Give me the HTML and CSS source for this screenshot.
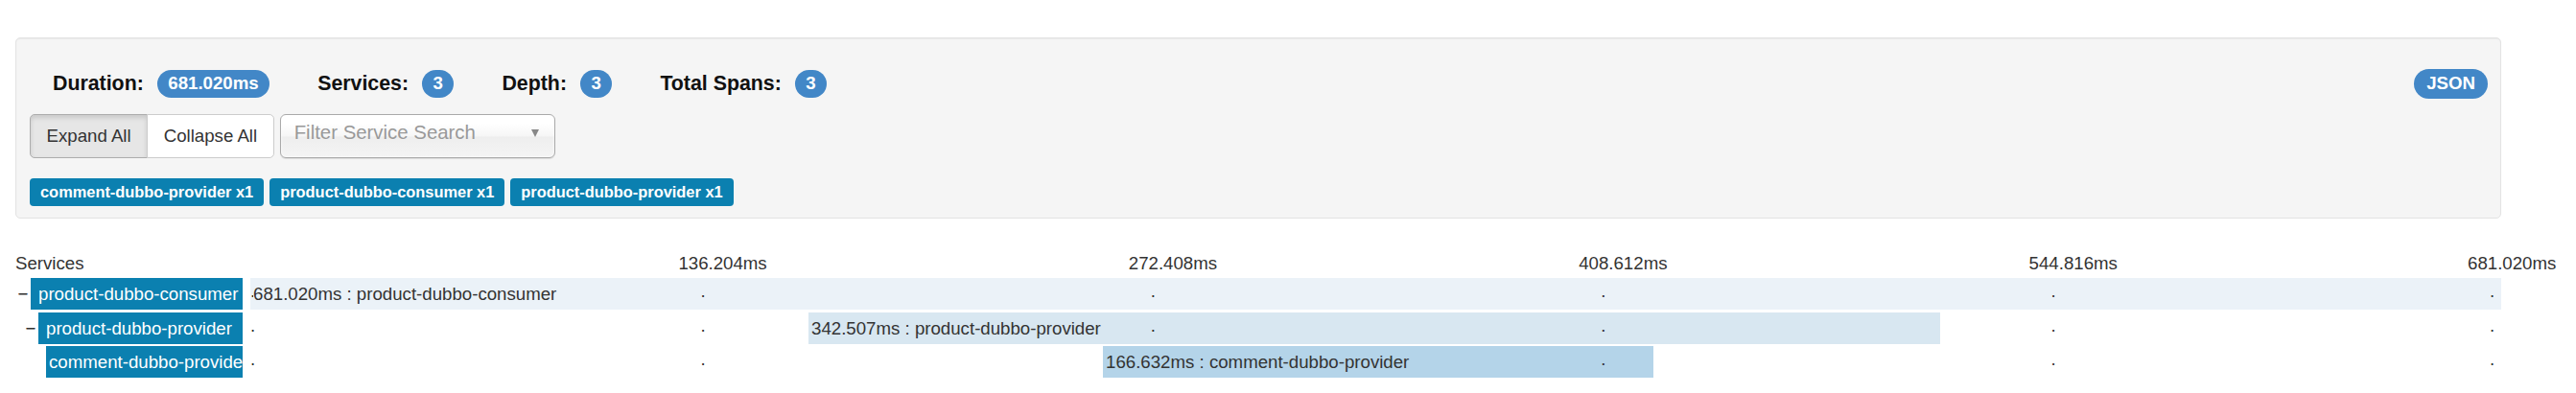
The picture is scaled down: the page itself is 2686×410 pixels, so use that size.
FILE: index.html
```html
<!DOCTYPE html>
<html lang="en">
<head>
<meta charset="utf-8">
<title>Trace</title>
<link rel="stylesheet" href="styles.css">
</head>
<body>
<main class="page">
  <section class="well">
    <div class="stats">
      <div class="stat-list">
        <span class="stat"><strong class="stat-label">Duration:</strong><span class="badge">681.020ms</span></span>
        <span class="stat"><strong class="stat-label">Services:</strong><span class="badge">3</span></span>
        <span class="stat"><strong class="stat-label">Depth:</strong><span class="badge">3</span></span>
        <span class="stat"><strong class="stat-label">Total Spans:</strong><span class="badge">3</span></span>
      </div>
      <a class="badge badge-json">JSON</a>
    </div>
    <div class="controls">
      <div class="btn-group">
        <button class="btn active" type="button">Expand All</button>
        <button class="btn" type="button">Collapse All</button>
      </div>
      <div class="chosen">
        <span class="placeholder">Filter Service Search</span>
        <svg class="arrow" width="8" height="8" viewBox="0 0 8 8"><polygon points="0,0 8,0 4,8" fill="#888"/></svg>
      </div>
    </div>
    <div class="tags">
      <span class="tag">comment-dubbo-provider x1</span>
      <span class="tag">product-dubbo-consumer x1</span>
      <span class="tag">product-dubbo-provider x1</span>
    </div>
  </section>

  <section class="trace">
    <div class="trace-header">
      <div class="handle-col">Services</div>
      <div class="timeline">
        <span class="tick" style="left: calc(20% - 23px)">136.204ms</span>
        <span class="tick" style="left: calc(40% - 23px)">272.408ms</span>
        <span class="tick" style="left: calc(60% - 23px)">408.612ms</span>
        <span class="tick" style="left: calc(80% - 23px)">544.816ms</span>
        <span class="tick" style="left: calc(100% - 35px)">681.020ms</span>
      </div>
    </div>

    <div class="row">
      <div class="handle depth-0">
        <span class="toggle">&minus;</span>
        <span class="svc">product-dubbo-consumer</span>
      </div>
      <div class="track">
        <div class="bar bar-1" style="left: 0%; width: 100%"><span class="bar-text">681.020ms : product-dubbo-consumer</span></div>
        <span class="dot" style="left: 0%">.</span>
        <span class="dot" style="left: 20%">.</span>
        <span class="dot" style="left: 40%">.</span>
        <span class="dot" style="left: 60%">.</span>
        <span class="dot" style="left: 80%">.</span>
        <span class="dot" style="left: calc(100% - 12px)">.</span>
      </div>
    </div>

    <div class="row">
      <div class="handle depth-1">
        <span class="toggle">&minus;</span>
        <span class="svc">product-dubbo-provider</span>
      </div>
      <div class="track">
        <div class="bar bar-2" style="left: 24.8%; width: 50.29%"><span class="bar-text">342.507ms : product-dubbo-provider</span></div>
        <span class="dot" style="left: 0%">.</span>
        <span class="dot" style="left: 20%">.</span>
        <span class="dot" style="left: 40%">.</span>
        <span class="dot" style="left: 60%">.</span>
        <span class="dot" style="left: 80%">.</span>
        <span class="dot" style="left: calc(100% - 12px)">.</span>
      </div>
    </div>

    <div class="row">
      <div class="handle depth-2">
        <span class="toggle"></span>
        <span class="svc svc-tight">comment-dubbo-provider</span>
      </div>
      <div class="track">
        <div class="bar bar-3" style="left: 37.88%; width: 24.47%"><span class="bar-text">166.632ms : comment-dubbo-provider</span></div>
        <span class="dot" style="left: 0%">.</span>
        <span class="dot" style="left: 20%">.</span>
        <span class="dot" style="left: 40%">.</span>
        <span class="dot" style="left: 60%">.</span>
        <span class="dot" style="left: 80%">.</span>
        <span class="dot" style="left: calc(100% - 12px)">.</span>
      </div>
    </div>
  </section>
</main>
</body>
</html>
```

FILE: styles.css
```css
* {
  box-sizing: border-box;
}

html,
body {
  margin: 0;
  background: #fff;
}

body {
  font-family: "Liberation Sans", Arial, sans-serif;
  font-size: 18.67px;
  line-height: 26.67px;
  color: #333;
}

.page {
  width: 2592px;
  margin: 39px 0 0 16px;
}

/* ---------- summary well ---------- */
.well {
  background: #f5f5f5;
  border: 1px solid #e3e3e3;
  border-radius: 5px;
  box-shadow: inset 0 1px 1px rgba(0, 0, 0, 0.05);
  padding: 32px 13px 12px 14px;
  margin-bottom: 34px;
}

.stats {
  display: flex;
  align-items: center;
  justify-content: space-between;
  height: 31px;
  margin: 0 0 16px 24px;
}

.stat-list {
  display: flex;
  align-items: center;
  gap: 50px;
}

.stat {
  display: flex;
  align-items: center;
  gap: 14px;
}

.stat-label {
  font-size: 21.33px;
  line-height: 24px;
  font-weight: bold;
  color: #111;
}

.badge {
  display: inline-block;
  background: #4287c7;
  color: #fff;
  font-weight: bold;
  font-size: 18.67px;
  line-height: 1;
  padding: 5px 11.5px;
  border-radius: 15px;
  white-space: nowrap;
}

.badge-json {
  padding: 6px 13px;
  border-radius: 16px;
  text-decoration: none;
}

.controls {
  display: flex;
  gap: 6px;
  height: 46px;
  margin-bottom: 21px;
}

.btn-group {
  display: flex;
}

.btn {
  font: inherit;
  color: #333;
  background: #fff;
  border: 1px solid #ccc;
  padding: 0 16.5px;
  height: 46px;
  line-height: 44px;
  margin: 0;
}

.btn:first-child {
  border-radius: 5px 0 0 5px;
}

.btn:last-child {
  border-radius: 0 5px 5px 0;
  margin-left: -1px;
}

.btn.active {
  background: #e6e6e6;
  border-color: #adadad;
  box-shadow: inset 0 3px 5px rgba(0, 0, 0, 0.125);
}

.chosen {
  width: 287px;
  height: 46px;
  border: 1px solid #aaa;
  border-radius: 6px;
  background: linear-gradient(#fff 20%, #f6f6f6 50%, #eee 52%, #f4f4f4 100%);
  box-shadow: inset 0 0 3px #fff, 0 1px 1px rgba(0, 0, 0, 0.1);
  display: flex;
  align-items: flex-start;
  justify-content: space-between;
  padding: 5px 16px 0 14px;
  color: #999;
  font-size: 20.4px;
}

.arrow {
  margin-top: 10px;
}

.tags {
  display: flex;
  gap: 6px;
}

.tag {
  background: #0b80b0;
  color: #fff;
  font-weight: bold;
  font-size: 16.4px;
  line-height: 16px;
  padding: 6px 11px 7px;
  border-radius: 4px;
  white-space: nowrap;
}

/* ---------- trace timeline ---------- */
.trace-header {
  display: flex;
  height: 28px;
}

.handle-col {
  width: 245px;
  flex: none;
}

.timeline {
  position: relative;
  flex: 1;
}

.tick {
  position: absolute;
  top: 0;
  white-space: nowrap;
}

.row {
  display: flex;
  height: 33px;
  margin-bottom: 2.5px;
}

.handle {
  width: 245px;
  flex: none;
  display: flex;
  padding-right: 8px;
}

.depth-1 {
  padding-left: 8px;
}

.depth-2 {
  padding-left: 16px;
}

.toggle {
  width: 16px;
  flex: none;
  text-align: center;
  line-height: 33px;
}

.svc {
  flex: 1;
  min-width: 0;
  background: #0b80b0;
  color: #fff;
  padding-left: 8px;
  line-height: 34px;
  white-space: nowrap;
  overflow: hidden;
}

.svc-tight {
  padding-left: 3px;
}

.track {
  flex: 1;
  position: relative;
  z-index: 0;
}

.bar {
  position: absolute;
  top: 0;
  height: 33px;
  padding-left: 3px;
  line-height: 34px;
  white-space: nowrap;
}

.bar-1 {
  background: #ebf2f8;
}

.bar-2 {
  background: #d8e7f1;
}

.bar-3 {
  background: #b4d4e9;
}

.bar-text {
  position: relative;
  z-index: 2;
  background: inherit;
}

.dot {
  position: absolute;
  top: 0;
  line-height: 27px;
  z-index: 1;
}
```
